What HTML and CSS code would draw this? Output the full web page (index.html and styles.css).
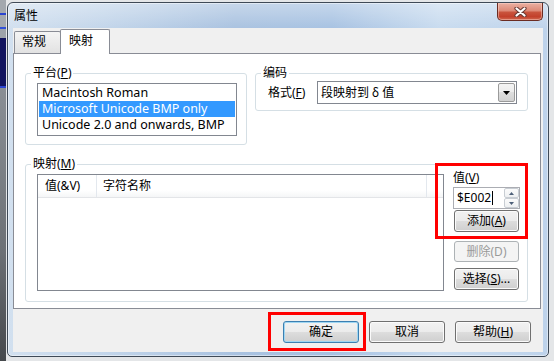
FILE: index.html
```html
<!DOCTYPE html>
<html lang="zh">
<head>
<meta charset="utf-8">
<title>属性</title>
<link rel="stylesheet" href="styles.css">
</head>
<body>
<div class="desk">
  <div class="window">
    <div class="titlebar">
      <span class="title">属性</span>
      <div class="close">
        <svg width="13" height="10" viewBox="0 0 13 10"><path d="M2.5 1.5 L10.5 8.5 M10.5 1.5 L2.5 8.5" stroke="#6a3a33" stroke-width="4.2" stroke-linecap="round" fill="none"/><path d="M2.5 1.5 L10.5 8.5 M10.5 1.5 L2.5 8.5" stroke="#fff" stroke-width="2.2" stroke-linecap="round" fill="none"/></svg>
      </div>
    </div>
    <div class="client">
      <div class="tabs">
        <div class="tab">常规</div>
        <div class="tab active">映射</div>
      </div>
      <div class="panel">
        <div class="toprow">
          <fieldset class="group g-platform">
            <legend>平台(<u>P</u>)</legend>
            <div class="listbox">
              <div class="item">Macintosh Roman</div>
              <div class="item sel">Microsoft Unicode BMP only</div>
              <div class="item">Unicode 2.0 and onwards, BMP</div>
            </div>
          </fieldset>
          <fieldset class="group g-enc">
            <legend>编码</legend>
            <div class="encrow">
              <span class="lbl">格式(<u>F</u>)</span>
              <div class="combo">
                <span class="combo-text">段映射到 δ 值</span>
                <span class="drop"><svg width="7" height="4" viewBox="0 0 7 4"><path d="M0 0 H7 L3.5 4 Z" fill="#000"/></svg></span>
              </div>
            </div>
          </fieldset>
        </div>
        <fieldset class="group g-map">
          <legend>映射(<u>M</u>)</legend>
          <div class="maprow">
            <div class="listview">
              <div class="lvhead">
                <div class="col c1">值(&amp;V)</div>
                <div class="col c2">字符名称</div>
                <div class="col c3"></div>
              </div>
            </div>
            <div class="side">
              <span class="vlabel">值(<u>V</u>)</span>
              <div class="spin">
                <span class="spin-text">$E002</span><span class="caret"></span>
                <div class="spin-btns">
                  <span class="sbtn"><svg width="5" height="3" viewBox="0 0 5 3"><path d="M0 3 H5 L2.5 0 Z" fill="#4d6079"/></svg></span>
                  <span class="sbtn"><svg width="5" height="3" viewBox="0 0 5 3"><path d="M0 0 H5 L2.5 3 Z" fill="#4d6079"/></svg></span>
                </div>
              </div>
              <div class="btn b-add">添加(<u>A</u>)</div>
              <div class="btn b-del disabled">删除(D)</div>
              <div class="btn b-sel">选择(<u>S</u>)...</div>
              <div class="mark mark-side"></div>
            </div>
          </div>
        </fieldset>
      </div>
      <div class="footer">
        <div class="okwrap">
          <div class="btn fbtn default">确定</div>
          <div class="mark mark-ok"></div>
        </div>
        <div class="btn fbtn">取消</div>
        <div class="btn fbtn">帮助(<u>H</u>)</div>
      </div>
    </div>
  </div>
</div>
</body>
</html>
```
FILE: styles.css
```css
* { box-sizing: border-box; }
html, body { margin: 0; padding: 0; }
body {
  width: 554px;
  height: 361px;
  overflow: hidden;
  font-family: "Noto Sans", "Noto Sans CJK SC", sans-serif;
  font-size: 12px;
  color: #000;
}
u { text-decoration: underline; text-underline-offset: 1px; }

.desk {
  width: 554px;
  height: 361px;
  padding: 2px 0 0 7px;
  background-color: #e4e6e8;
  background-image:
    linear-gradient(to bottom, #a3a8ae 0, #a3a8ae 13px, #2a44d0 13px, #2a44d0 15px, #a3a8ae 15px, #a3a8ae 27px, #3050d8 27px, #3050d8 29px, #9da3aa 29px, #9da3aa 38px, #10135e 38px, #10135e 86px, #2a44d0 86px, #2a44d0 88px, #8a8f95 88px, #6d7176 250px, #45484c 361px);
  background-size: 6px 361px;
  background-repeat: no-repeat;
}

.window {
  width: 542px;
  height: 355px;
  border: 1px solid #3f4a57;
  border-radius: 6px 6px 5px 5px;
  padding: 0 5px 4px 5px;
  display: flex;
  flex-direction: column;
  background:
    linear-gradient(to bottom, rgba(255,255,255,0.35) 0, rgba(255,255,255,0) 26px),
    linear-gradient(to right, #d2e0ef 0%, #c2d5ea 18%, #a9c2e0 42%, #a7c2e2 60%, #c8dbef 80%, #bed3eb 100%);
  box-shadow: inset 0 0 0 1px rgba(255,255,255,0.45);
}

.titlebar {
  flex: none;
  height: 25px;
  display: flex;
  justify-content: space-between;
  align-items: flex-start;
}
.title {
  margin: 5px 0 0 1px;
  line-height: 16px;
  font-size: 12px;
}
.close {
  width: 46px;
  height: 18px;
  border: 1px solid #6b2c22;
  border-top: none;
  border-radius: 0 0 5px 5px;
  background: linear-gradient(to bottom, #eab0a2 0%, #dd8a77 45%, #c9533c 55%, #c2402b 80%, #d0684f 100%);
  display: flex;
  align-items: center;
  justify-content: center;
  box-shadow: inset 0 0 0 1px rgba(255,220,210,0.45);
}

.client {
  flex: 1;
  background: #f0f0f0;
  display: flex;
  flex-direction: column;
}

.tabs {
  flex: none;
  height: 25px;
  display: flex;
  align-items: flex-end;
  padding-left: 1px;
}
.tab {
  height: 22px;
  width: 47px;
  padding: 0 0 0 7px;
  border: 1px solid #898c95;
  border-bottom: none;
  border-radius: 2px 2px 0 0;
  background: linear-gradient(to bottom, #f4f4f4, #e2e2e2);
  line-height: 20px;
}
.tab.active {
  position: relative;
  z-index: 1;
  height: 25px;
  width: 50px;
  margin-left: -1px;
  margin-bottom: -1px;
  padding-left: 8px;
  background: #fff;
  line-height: 22px;
}

.panel {
  flex: none;
  height: 256px;
  margin-right: 2px;
  border: 1px solid #898c95;
  background: #fff;
  padding: 12px 12px 0 11px;
}

.toprow {
  display: flex;
  align-items: flex-start;
  gap: 8px;
}

fieldset.group {
  margin: 0;
  min-width: 0;
  border: 1px solid #d5dfe5;
  border-radius: 3px;
  box-shadow: inset 1px 1px 0 #fff;
}
fieldset.group legend {
  padding: 0 2px;
  margin-left: -6px;
  line-height: 14px;
  font-size: 12px;
}

fieldset.g-platform {
  width: 222px;
  padding: 0 9px 8px 11px;
}
.listbox {
  margin-top: 3px;
  width: 200px;
  height: 53px;
  border: 1px solid #828790;
  padding: 1px;
  background: #fff;
}
.item {
  height: 16px;
  line-height: 16px;
  padding-left: 3px;
  font-size: 12.5px;
  white-space: nowrap;
}
.item.sel {
  background: #3399ff;
  color: #fff;
}

fieldset.g-enc {
  width: 273px;
  padding: 0 10px 6px 11px;
}
.encrow {
  margin-top: 1px;
  display: flex;
  align-items: center;
}
.lbl {
  width: 50px;
  padding-left: 1px;
  line-height: 14px;
}
.combo {
  width: 200px;
  height: 23px;
  border: 1px solid #828790;
  background: #fff;
  padding: 1px;
  display: flex;
  align-items: center;
  justify-content: space-between;
}
.combo-text {
  padding-left: 2px;
  line-height: 16px;
}
.drop {
  width: 17px;
  height: 19px;
  border: 1px solid #9a9a9a;
  border-radius: 2px;
  background: linear-gradient(to bottom, #f4f4f4 0%, #ececec 50%, #dedede 50%, #d2d2d2 100%);
  display: flex;
  align-items: center;
  justify-content: center;
}

fieldset.g-map {
  margin-top: 12px;
  padding: 0 7px 10px 11px;
}
.maprow {
  display: flex;
  align-items: flex-start;
}
.listview {
  margin-top: 3px;
  width: 407px;
  height: 117px;
  border: 1px solid #828790;
  background: #fff;
}
.lvhead {
  display: flex;
  height: 23px;
  border-bottom: 1px solid #e3e5e8;
  background: linear-gradient(to bottom, #fff 0%, #fff 70%, #f5f6f7 100%);
}
.col {
  line-height: 22px;
  border-right: 1px solid #e3e8ee;
}
.c1 { width: 59px; padding-left: 7px; }
.c2 { width: 330px; padding-left: 6px; }
.c3 { flex: 1; border-right: none; }

.side {
  position: relative;
  margin-left: 9px;
  width: 67px;
  display: flex;
  flex-direction: column;
}
.vlabel {
  line-height: 14px;
}
.spin {
  margin-top: 2px;
  height: 22px;
  border: 1px solid #abadb3;
  background: #fff;
  display: flex;
  align-items: center;
  padding-left: 3px;
}
.spin-text {
  line-height: 16px;
}
.caret {
  width: 1px;
  height: 14px;
  background: #000;
  margin-left: 1px;
}
.spin-btns {
  margin-left: auto;
  width: 15px;
  height: 20px;
  display: flex;
  flex-direction: column;
}
.sbtn {
  flex: 1;
  border: 1px solid #c8cdd3;
  border-radius: 2px;
  background: linear-gradient(to bottom, #fbfbfb, #eef0f2);
  display: flex;
  align-items: center;
  justify-content: center;
}

.btn {
  height: 22px;
  border: 1px solid #707070;
  border-radius: 3px;
  background: linear-gradient(to bottom, #f2f2f2 0%, #ebebeb 50%, #dddddd 50%, #cfcfcf 100%);
  box-shadow: inset 0 0 0 1px #fbfbfb;
  display: flex;
  align-items: center;
  justify-content: center;
  line-height: 16px;
  white-space: nowrap;
}
.b-add { margin: 1px 1px 0 1px; }
.b-del { margin: 9px 1px 0 1px; height: 21px; }
.b-sel { margin: 6px 1px 0 1px; }
.btn.disabled {
  border-color: #adb2b5;
  background: #f4f4f4;
  box-shadow: none;
  color: #9a9a9a;
}

.mark {
  position: absolute;
  border: 3px solid #ff0000;
  pointer-events: none;
}
.mark-side {
  left: -18px;
  top: -8px;
  width: 93px;
  height: 76px;
}

.footer {
  flex: 1;
  display: flex;
  justify-content: flex-end;
  align-items: flex-start;
  gap: 10px;
  padding: 12px 12px 0 0;
}
.okwrap {
  position: relative;
}
.fbtn { width: 76px; }
.btn.default {
  border-color: #3c7fb1;
  box-shadow: inset 0 0 0 1px #9fd6f2;
}
.mark-ok {
  left: -15px;
  top: -9px;
  width: 98px;
  height: 39px;
}
```
